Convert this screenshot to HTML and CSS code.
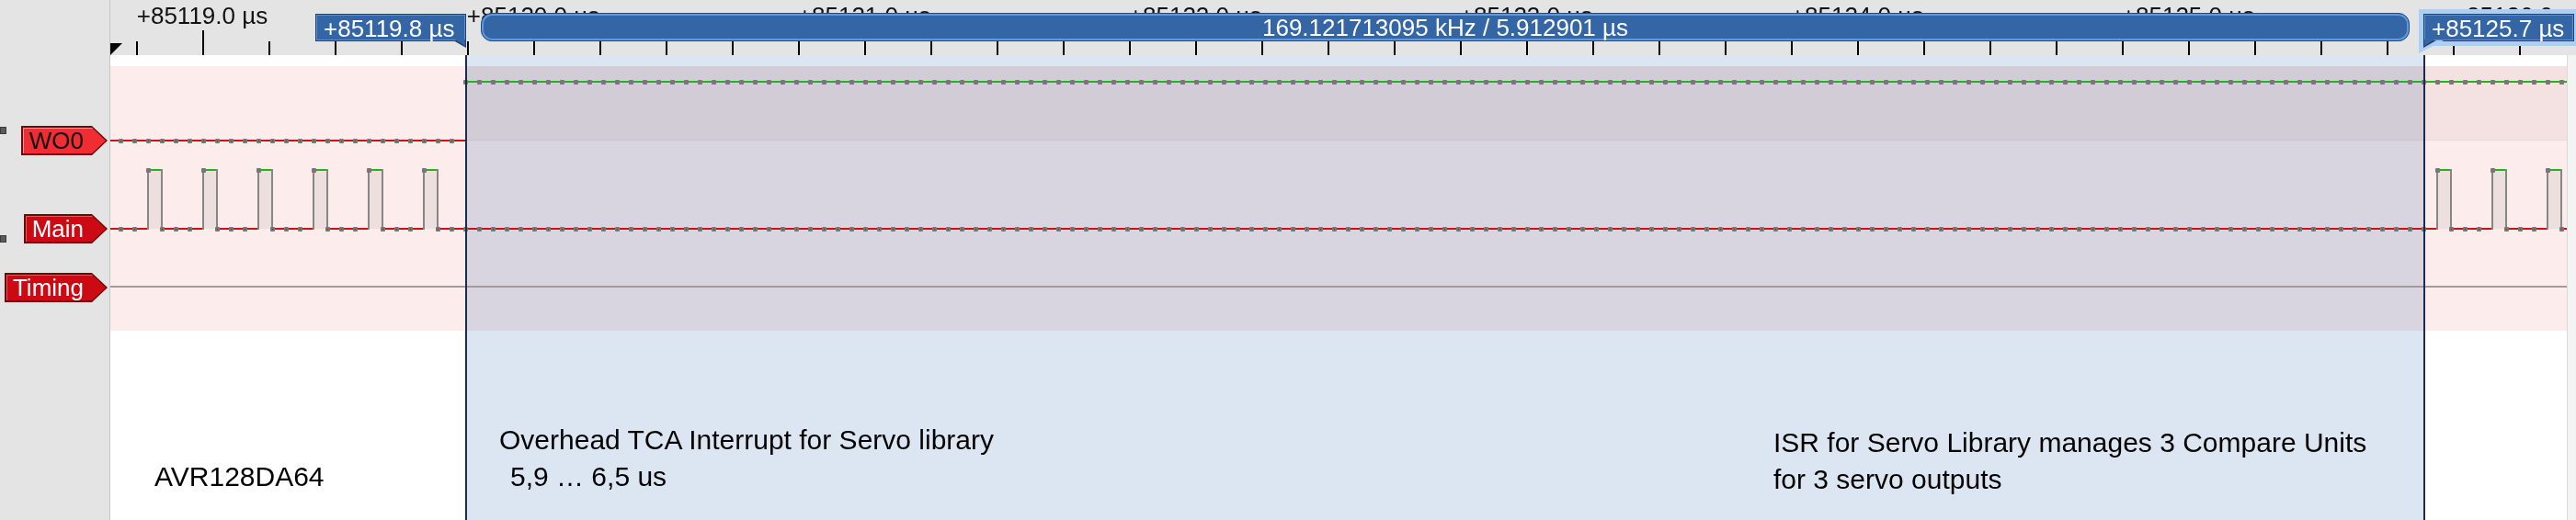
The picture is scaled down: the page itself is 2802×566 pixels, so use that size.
FILE: index.html
```html
<!DOCTYPE html>
<html>
<head>
<meta charset="utf-8">
<title>Logic analyzer</title>
<link rel="stylesheet" href="styles.css">
</head>
<body>
<div class="app">
  <aside class="sidebar">
    <div class="lane-label lane-wo0">
      <span class="grip"></span>
      <div class="tag tag-bright"><span>WO0</span></div>
    </div>
    <div class="lane-label lane-main">
      <span class="grip"></span>
      <div class="tag"><span>Main</span></div>
    </div>
    <div class="lane-label lane-timing">
      <div class="tag"><span>Timing</span></div>
    </div>
  </aside>

  <main class="view">
    <div class="ruler">
      <div class="ruler-labels">
        <span>+85119.0 µs</span>
        <span>+85120.0 µs</span>
        <span>+85121.0 µs</span>
        <span>+85122.0 µs</span>
        <span>+85123.0 µs</span>
        <span>+85124.0 µs</span>
        <span>+85125.0 µs</span>
        <span>+85126.0 µs</span>
      </div>
      <div class="ruler-ticks"><span class="origin"></span></div>
      <div class="range-bar">169.121713095 kHz / 5.912901 µs</div>
      <div class="marker marker-a"><span class="tail"></span>+85119.8 µs</div>
      <div class="marker marker-b"><span class="tail"></span>+85125.7 µs</div>
    </div>

    <div class="canvas">
      <div class="top-strip"></div>
      <div class="lanes"><div class="lane-band"></div></div>
      <div class="notes">
        <div class="note note-chip">AVR128DA64</div>
        <div class="note note-tca">
          <p>Overhead TCA Interrupt for Servo library</p>
          <p class="indent">5,9 … 6,5 us</p>
        </div>
        <div class="note note-isr">
          <p>ISR for Servo Library manages 3 Compare Units</p>
          <p>for 3 servo outputs</p>
        </div>
      </div>

      <div class="selection"></div>

      <svg class="wave" width="2672" height="300" viewBox="0 0 2672 300">
        <defs>
          <pattern id="dotG" x="9" y="27" width="15" height="5" patternUnits="userSpaceOnUse">
            <rect width="5" height="5" rx="1" fill="#777"/>
          </pattern>
          <pattern id="dotW" x="9" y="91" width="15" height="5" patternUnits="userSpaceOnUse">
            <rect width="5" height="5" rx="1" fill="#777"/>
            <rect x="2" y="2" width="1" height="1" fill="#a01820"/>
          </pattern>
          <pattern id="dotM" x="9" y="187" width="15" height="5" patternUnits="userSpaceOnUse">
            <rect width="5" height="5" rx="1" fill="#777"/>
            <rect x="2" y="2" width="1" height="1" fill="#a01820"/>
          </pattern>
        </defs>

        <!-- green lane -->
        <path d="M386 29H2672" stroke="#1fb51f" stroke-width="2" fill="none"/>
        <rect x="384" y="27" width="2288" height="5" fill="url(#dotG)"/>

        <!-- WO0 -->
        <path d="M0 93H387" stroke="#c8101e" stroke-width="2" fill="none"/>
        <rect x="9" y="91" width="365" height="5" fill="url(#dotW)"/>

        <!-- Main pulses -->
        <g fill="#000" fill-opacity="0.055">
          <rect x="41" y="125" width="15" height="64"/>
          <rect x="101" y="125" width="15" height="64"/>
          <rect x="161" y="125" width="15" height="64"/>
          <rect x="221" y="125" width="15" height="64"/>
          <rect x="281" y="125" width="15" height="64"/>
          <rect x="341" y="125" width="15" height="64"/>
          <rect x="2531" y="125" width="15" height="64"/>
          <rect x="2591" y="125" width="15" height="64"/>
          <rect x="2651" y="125" width="15" height="64"/>
        </g>
        <path d="M0 189H41M56 189H101M116 189H161M176 189H221M236 189H281M296 189H341M356 189H2531M2546 189H2591M2606 189H2651M2666 189H2672" stroke="#c8101e" stroke-width="2" fill="none"/>
        <path d="M41 125H56M101 125H116M161 125H176M221 125H236M281 125H296M341 125H356M2531 125H2546M2591 125H2606M2651 125H2666" stroke="#1fb51f" stroke-width="2" fill="none"/>
        <path d="M41 124V190M56 124V190M101 124V190M116 124V190M161 124V190M176 124V190M221 124V190M236 124V190M281 124V190M296 124V190M341 124V190M356 124V190M2531 124V190M2546 124V190M2591 124V190M2606 124V190M2651 124V190M2666 124V190" stroke="#868686" stroke-width="2" fill="none"/>
        <g fill="url(#dotM)">
          <rect x="9" y="187" width="20" height="5"/>
          <rect x="54" y="187" width="35" height="5"/>
          <rect x="114" y="187" width="35" height="5"/>
          <rect x="174" y="187" width="35" height="5"/>
          <rect x="234" y="187" width="35" height="5"/>
          <rect x="294" y="187" width="35" height="5"/>
          <rect x="354" y="187" width="2165" height="5"/>
          <rect x="2544" y="187" width="35" height="5"/>
          <rect x="2604" y="187" width="35" height="5"/>
          <rect x="2664" y="187" width="5" height="5"/>
        </g>
        <g fill="#777">
          <rect x="39" y="123" width="5" height="5" rx="1"/>
          <rect x="99" y="123" width="5" height="5" rx="1"/>
          <rect x="159" y="123" width="5" height="5" rx="1"/>
          <rect x="219" y="123" width="5" height="5" rx="1"/>
          <rect x="279" y="123" width="5" height="5" rx="1"/>
          <rect x="339" y="123" width="5" height="5" rx="1"/>
          <rect x="2529" y="123" width="5" height="5" rx="1"/>
          <rect x="2589" y="123" width="5" height="5" rx="1"/>
          <rect x="2649" y="123" width="5" height="5" rx="1"/>
        </g>

        <!-- Timing -->
        <path d="M0 252H2672" stroke="#a39b9b" stroke-width="2" fill="none"/>
      </svg>

      <div class="cursor cursor-a"></div>
      <div class="cursor cursor-b"></div>
    </div>
  </main>

  <div class="scrollbar">
    <div class="scroll-head"></div>
    <div class="scroll-track"></div>
  </div>
</div>
</body>
</html>
```

FILE: styles.css
```css
html, body {
  margin: 0;
  padding: 0;
}

body {
  background: #e4e4e4;
  font-family: "Liberation Sans", Arial, sans-serif;
  overflow: hidden;
  width: 2802px;
  height: 566px;
}

.app {
  display: flex;
  width: 2802px;
  height: 566px;
}

/* ---------- sidebar with lane labels ---------- */
.sidebar {
  flex: none;
  width: 117px;
  padding-right: 2px;
  border-right: 1px solid #c6c6c6;
  display: flex;
  flex-direction: column;
}

.lane-label {
  display: flex;
  justify-content: space-between;
}

.lane-wo0 {
  margin-top: 137px;
  align-items: flex-start;
}

.lane-wo0 .grip {
  margin-top: 1px;
}

.lane-main {
  margin-top: 64px;
  align-items: flex-end;
}

.lane-main .grip {
  margin-bottom: 1px;
}

.lane-timing {
  margin-top: 32px;
  justify-content: flex-end;
}

.grip {
  flex: none;
  width: 7px;
  height: 8px;
  background: #5a5a5a;
  box-shadow: inset 0 0 0 1px #3c3c3c;
}

.tag {
  flex: none;
  padding: 2px;
  background: #6a0b0b;
  clip-path: polygon(0 0, calc(100% - 17px) 0, 100% 50%, calc(100% - 17px) 100%, 0 100%);
}

.tag span {
  display: block;
  height: 28px;
  padding: 0 24px 0 7px;
  background: #cc0a14;
  color: #fff;
  font-size: 26px;
  line-height: 28px;
  white-space: nowrap;
  box-shadow: inset 1px 1px 0 #e05a5a;
  clip-path: polygon(0 0, calc(100% - 15px) 0, 100% 50%, calc(100% - 15px) 100%, 0 100%);
}

.tag-bright span {
  background: #f02d32;
  color: #111;
  box-shadow: inset 1px 1px 0 #ff8c8c;
}

/* ---------- main view ---------- */
.view {
  flex: none;
  width: 2672px;
  display: flex;
  flex-direction: column;
  position: relative;
}

.ruler {
  flex: none;
  height: 60px;
  position: relative;
}

.ruler-labels {
  display: flex;
  margin-left: -80px;
  height: 33px;
  padding-top: 2px;
  box-sizing: border-box;
}

.ruler-labels span {
  flex: none;
  width: 360px;
  text-align: center;
  font-size: 26px;
  line-height: 30px;
  color: #111;
  white-space: nowrap;
}

.ruler-ticks {
  height: 27px;
  display: flex;
  align-items: flex-end;
  background-image:
    linear-gradient(90deg, #000 2px, transparent 2px),
    linear-gradient(90deg, #000 2px, transparent 2px);
  background-size: 72px 15px, 360px 27px;
  background-position: 28px 100%, 100px 100%;
  background-repeat: repeat-x;
}

.origin {
  width: 13px;
  height: 13px;
  background: #000;
  clip-path: polygon(0 0, 100% 0, 0 100%);
}

.range-bar {
  position: absolute;
  left: 403px;
  top: 14px;
  width: 2098px;
  height: 31px;
  box-sizing: border-box;
  border: 1px solid #2a4676;
  border-radius: 12px;
  background: #3465a5;
  box-shadow: inset 0 0 0 2px #5a9be6;
  color: #fff;
  font-size: 26px;
  line-height: 31px;
  text-align: center;
  white-space: nowrap;
}

.marker {
  position: absolute;
  top: 15px;
  width: 164px;
  height: 30px;
  box-sizing: border-box;
  padding-left: 8px;
  border: 1px solid #263f69;
  background: #3465a5;
  box-shadow: inset 0 0 0 1px #5a92d8;
  color: #fff;
  font-size: 26px;
  line-height: 30px;
  white-space: nowrap;
}

.marker-a {
  left: 223px;
}

.marker-a .tail {
  position: absolute;
  top: 100%;
  right: -1px;
  width: 14px;
  height: 8px;
  background: #263f69;
  clip-path: polygon(0 0, 100% 0, 100% 100%);
}

.marker-a::after {
  content: "";
  position: absolute;
  top: calc(100% - 1px);
  right: 0;
  width: 11px;
  height: 7px;
  background: #3465a5;
  clip-path: polygon(0 0, 100% 0, 100% 100%);
}

.marker-b {
  left: 2516px;
  box-shadow: inset 0 0 0 1px #5a92d8, 0 0 0 5px #abcff5;
}

.marker-b::before {
  content: "";
  position: absolute;
  top: 100%;
  left: -6px;
  width: 27px;
  height: 14px;
  background: #abcff5;
  clip-path: polygon(0 0, 100% 0, 0 100%);
}

.marker-b .tail {
  position: absolute;
  top: 100%;
  left: -1px;
  width: 14px;
  height: 8px;
  background: #263f69;
  clip-path: polygon(0 0, 100% 0, 0 100%);
}

.marker-b::after {
  content: "";
  position: absolute;
  top: calc(100% - 1px);
  left: 0;
  width: 11px;
  height: 7px;
  background: #3465a5;
  clip-path: polygon(0 0, 100% 0, 0 100%);
}

/* ---------- canvas ---------- */
.canvas {
  flex: 1;
  position: relative;
  display: flex;
  flex-direction: column;
}

.top-strip {
  flex: none;
  height: 12px;
  background: #fff;
}

.lanes {
  flex: none;
  height: 288px;
  background: #fcecec;
}

.lane-band {
  margin-left: 387px;
  height: 80px;
  background: rgba(40, 0, 20, 0.04);
  border-bottom: 1px solid rgba(0, 0, 0, 0.04);
}

.notes {
  flex: 1;
  background: #fff;
  display: grid;
  grid-template-columns: 48px 375px 1386px 1fr;
  font-size: 30px;
  line-height: 40px;
  color: #000;
}

.note p {
  margin: 0;
  white-space: nowrap;
}

.note-chip {
  grid-column: 2;
  padding-top: 139px;
}

.note-tca {
  grid-column: 3;
  padding-top: 99px;
}

.note-tca .indent {
  padding-left: 12px;
}

.note-isr {
  grid-column: 4;
  padding-top: 102px;
}

.selection {
  position: absolute;
  left: 387px;
  width: 2130px;
  top: 0;
  bottom: 0;
  background: #dce6f2;
  mix-blend-mode: multiply;
}

.wave {
  position: absolute;
  left: 0;
  top: 0;
}

.cursor {
  position: absolute;
  top: 0;
  bottom: 0;
  width: 2px;
  background: #1c2b48;
}

.cursor-a {
  left: 386px;
}

.cursor-b {
  left: 2516px;
}

/* ---------- right scroll strip ---------- */
.scrollbar {
  flex: none;
  width: 10px;
  display: flex;
  flex-direction: column;
}

.scroll-head {
  height: 60px;
}

.scroll-track {
  flex: 1;
  background: #f3f3f3;
  border-left: 1px solid #dcdcdc;
}
```
